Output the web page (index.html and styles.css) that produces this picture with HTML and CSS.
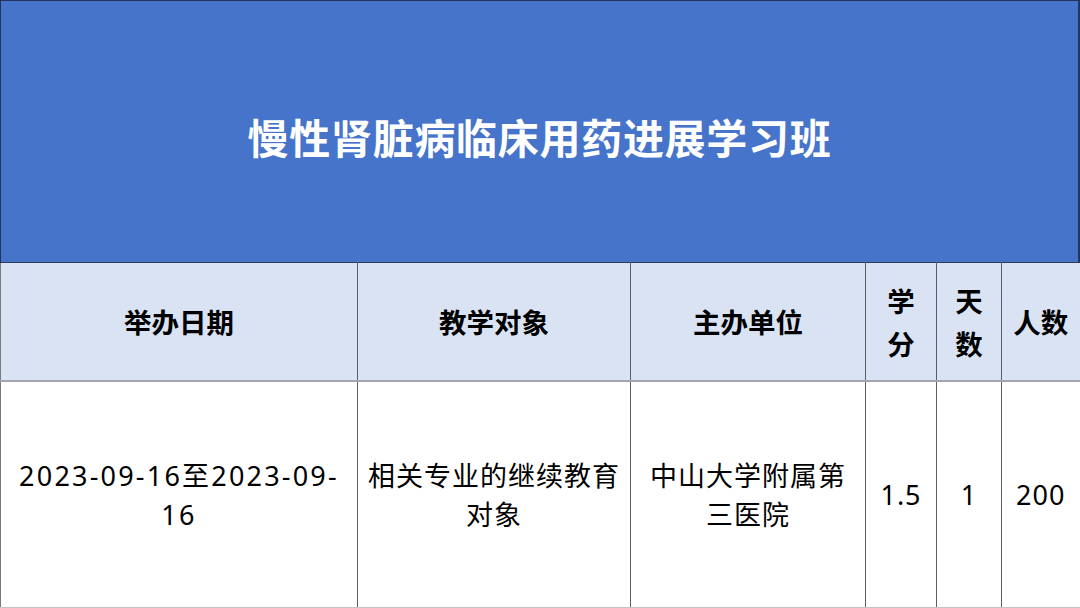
FILE: index.html
```html
<!DOCTYPE html>
<html lang="zh-CN">
<head>
<meta charset="utf-8">
<link rel="stylesheet" href="styles.css">
</head>
<body>
<div class="page">
  <div class="banner"><h1 class="title">慢性肾脏病临床用药进展学习班</h1></div>
  <table class="grid">
    <colgroup>
      <col class="c1"><col class="c2"><col class="c3"><col class="c4"><col class="c5"><col class="c6">
    </colgroup>
    <thead>
      <tr class="head">
        <th>举办日期</th>
        <th>教学对象</th>
        <th>主办单位</th>
        <th>学分</th>
        <th>天数</th>
        <th>人数</th>
      </tr>
    </thead>
    <tbody>
      <tr class="data">
        <td class="date">2023-09-16至2023-09-16</td>
        <td>相关专业的继续教育对象</td>
        <td>中山大学附属第三医院</td>
        <td>1.5</td>
        <td>1</td>
        <td>200</td>
      </tr>
    </tbody>
  </table>
</div>
</body>
</html>
```
FILE: styles.css
```css
html, body {
  margin: 0;
  padding: 0;
  background: #ffffff;
}
body {
  font-family: "Noto Sans CJK SC", "Noto Sans", sans-serif;
  width: 1080px;
  height: 608px;
  overflow: hidden;
}
.page {
  width: 1080px;
}
.banner {
  box-sizing: border-box;
  height: 262px;
  background: #4674cb;
  border-top: 1px solid #22345a;
  border-left: 1px solid #22345a;
  border-right: 2px solid #1f3564;
  display: flex;
  align-items: center;
  justify-content: center;
  padding-top: 10px;
}
.title {
  margin: 0;
  color: #ffffff;
  font-size: 41px;
  font-weight: 700;
  letter-spacing: 0.7px;
  line-height: 1.2;
}
.grid {
  width: 1080px;
  border-collapse: collapse;
  table-layout: fixed;
}
.c1 { width: 357px; }
.c2 { width: 273px; }
.c3 { width: 235px; }
.c4 { width: 71px; }
.c5 { width: 65px; }
.c6 { width: 79px; }
.grid th,
.grid td {
  border-left: 1px solid #5e5e5e;
  border-right: 1px solid #5e5e5e;
  padding: 0 10px;
  text-align: center;
  vertical-align: middle;
  color: #000000;
}
.grid th:first-child,
.grid td:first-child {
  border-left: 1px solid #7a7a7a;
}
.grid th:last-child,
.grid td:last-child {
  border-right: 2px solid #a8a8a8;
}
.head th {
  height: 117px;
  background: #dae3f3;
  border-top: 1px solid #2b3b5a;
  border-bottom: 2px solid #a3a6ad;
  font-size: 27.5px;
  font-weight: 700;
  line-height: 43px;
}
.data td {
  height: 225px;
  border-bottom: 1px solid #c4c4c4;
  font-family: "Noto Sans", "Noto Sans CJK SC", sans-serif;
  font-size: 27px;
  letter-spacing: 1px;
  font-weight: 400;
  line-height: 39px;
}
.data td.date {
  letter-spacing: 2.2px;
}
```
